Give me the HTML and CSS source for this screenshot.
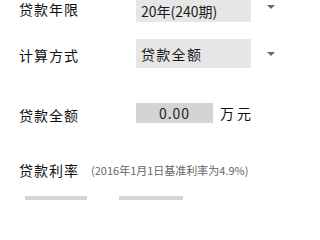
FILE: index.html
```html
<!DOCTYPE html>
<html lang="zh-CN">
<head>
<meta charset="utf-8">
<title>贷款计算</title>
<link rel="stylesheet" href="styles.css">
</head>
<body>
<div class="form">
  <div class="row row-select first">
    <div class="label">贷款年限</div>
    <div class="select"><span class="select-text">20年(240期)</span></div>
    <div class="caret"></div>
  </div>
  <div class="row row-select second">
    <div class="label">计算方式</div>
    <div class="select"><span class="select-text wide">贷款全额</span></div>
    <div class="caret"></div>
  </div>
  <div class="row row-amount">
    <div class="label shift">贷款全额</div>
    <div class="amount">0.00</div>
    <div class="unit">万元</div>
  </div>
  <div class="row row-rate">
    <div class="label">贷款利率</div>
    <div class="note">(2016年1月1日基准利率为4.9%)</div>
  </div>
  <div class="row row-boxes">
    <div class="box box-a"></div>
    <div class="box box-b"></div>
  </div>
</div>
</body>
</html>
```
FILE: styles.css
```css
html, body {
  margin: 0;
  padding: 0;
  background: #ffffff;
}
body {
  font-family: "Noto Sans CJK SC", "Noto Sans", sans-serif;
  color: #111111;
  overflow: hidden;
  width: 309px;
  height: 200px;
}
.form {
  display: flex;
  flex-direction: column;
}
.row {
  display: flex;
  align-items: center;
}
.label {
  width: 136px;
  box-sizing: border-box;
  padding-left: 19px;
  font-size: 14px;
  line-height: 20px;
  letter-spacing: 1px;
  white-space: nowrap;
  flex: none;
}
.row-select {
  height: 29px;
}
.first {
  margin-top: -7px;
}
.first .label {
  padding-top: 3px;
}
.second {
  margin-top: 17px;
}
.second .label {
  padding-top: 3px;
}
.select {
  width: 115px;
  height: 29px;
  background: #e6e6e6;
  display: flex;
  align-items: center;
  padding-left: 5px;
  box-sizing: border-box;
  flex: none;
}
.first .select {
  padding-top: 6px;
}
.select-text {
  font-size: 14px;
  line-height: 18px;
  color: #1a1a1a;
  white-space: nowrap;
}
.select-text.wide {
  letter-spacing: 1.3px;
}
.caret {
  margin-left: 16px;
  width: 0;
  height: 0;
  border-left: 4px solid transparent;
  border-right: 4px solid transparent;
  border-top: 4px solid #6a6a6a;
}
.first .caret {
  margin-top: -2px;
}
.row-amount {
  margin-top: 35px;
  height: 20px;
}
.label.shift {
  padding-top: 4px;
}
.amount {
  width: 77px;
  height: 20px;
  background: #d4d4d4;
  font-size: 14px;
  line-height: 20px;
  text-align: center;
  letter-spacing: 1px;
  color: #222222;
  flex: none;
}
.unit {
  margin-left: 7px;
  font-size: 14px;
  line-height: 20px;
  letter-spacing: 3px;
  white-space: nowrap;
}
.row-rate {
  margin-top: 37px;
  height: 20px;
}
.row-rate .label {
  width: auto;
  padding-right: 12px;
}
.note {
  font-size: 11px;
  line-height: 16px;
  color: #666666;
  white-space: nowrap;
}
.row-boxes {
  margin-top: 16px;
  padding-left: 25px;
  gap: 32px;
  align-items: flex-start;
}
.box {
  height: 30px;
  background: #d4d4d4;
  flex: none;
}
.box-a {
  width: 62px;
}
.box-b {
  width: 64px;
}
```
